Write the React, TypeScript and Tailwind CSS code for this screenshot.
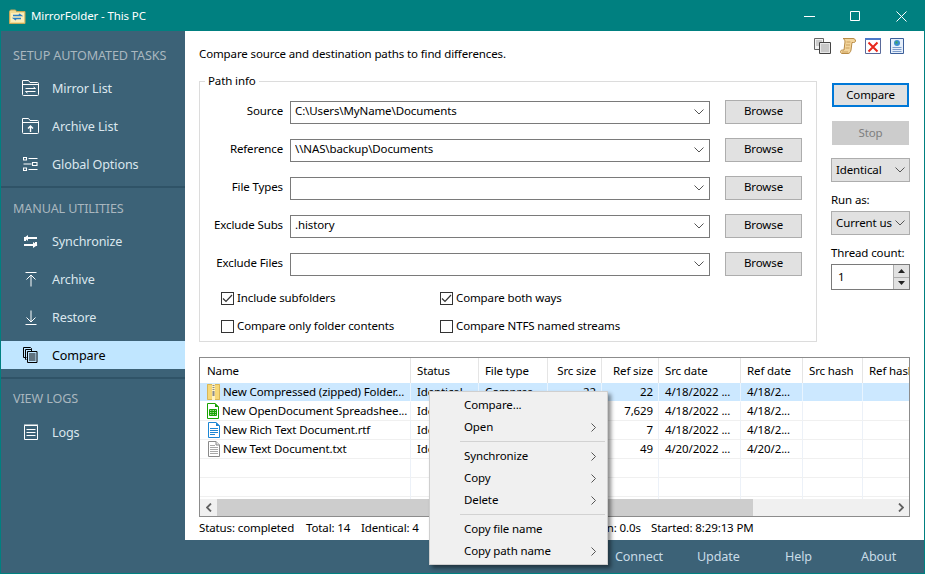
import type { ReactNode } from "react";

const FONT = "font-['Noto_Sans',sans-serif]";

function ChevronDown() {
  return (
    <svg width="10" height="6" viewBox="0 0 10 6" fill="none" stroke="#555" strokeWidth="1" className="shrink-0">
      <path d="M0.5 0.5 5 5l4.5-4.5" />
    </svg>
  );
}

function ChevronRight() {
  return (
    <svg width="5" height="9" viewBox="0 0 5 9" fill="none" stroke="#555" strokeWidth="1">
      <path d="M0.5 0.5 4.5 4.5 0.5 8.5" />
    </svg>
  );
}

/* sidebar icons */
function FolderBase({ children }: { children: ReactNode }) {
  return (
    <svg width="17" height="16" viewBox="0 0 17 16" fill="none" stroke="#fff" strokeWidth="1">
      <path d="M1.500 15.500a1 1 0 0 1-1-1v-14h6l1.500 2h7.500a1 1 0 0 1 1 1v11a1 1 0 0 1-1 1z" />
      <path d="M0.500 4.500h16" />
      {children}
    </svg>
  );
}

const MirrorIcon = () => (
  <FolderBase>
    <path d="M3.500 8.500h10l-2-1.500M13.500 11.500h-10l2 1.500" />
  </FolderBase>
);

const ArchiveListIcon = () => (
  <FolderBase>
    <path d="M8.500 14V8M6 10.500 8.500 8l2.500 2.500" strokeWidth="1.400" />
  </FolderBase>
);

const OptionsIcon = () => (
  <svg width="15" height="14" viewBox="0 0 15 14" fill="none" stroke="#fff">
    <path d="M0.500 0.500h3v2.500h-3zM5.500 1.500h9M0.500 7h8M9.500 5.500h4.500v3H9.500zM0.500 11h3v2.500h-3zM5.500 12.500h9" strokeWidth="1.100" />
  </svg>
);

const SyncIcon = () => (
  <svg width="15" height="13" viewBox="0 0 15 13" fill="none" stroke="#fff" strokeWidth="2">
    <path d="M14 3H2v3" />
    <path d="M1 10h12V7" />
    <path d="M5 0 1 3l4 3z" fill="#fff" strokeWidth="0" />
    <path d="M10 7l4.500 3L10 13z" fill="#fff" strokeWidth="0" />
  </svg>
);

const ArchiveIcon = () => (
  <svg width="12" height="15" viewBox="0 0 12 15" fill="none" stroke="#fff">
    <path d="M0.500 0.500h11M6 3V14.500M1.500 7.500 6 3l4.500 4.500" />
  </svg>
);

const RestoreIcon = () => (
  <svg width="12" height="15" viewBox="0 0 12 15" fill="none" stroke="#fff">
    <path d="M0.500 14.500h11M6 0.500V12M1.500 7.500 6 12l4.500-4.500" />
  </svg>
);

const CompareIcon = () => (
  <svg width="15" height="16" viewBox="0 0 15 16" fill="none" stroke="#000">
    <path d="M0.500 0.500h7l1 1v2M0.500 0.500v10h3" />
    <path d="M2.500 2.500h6v2M2.500 2.500v10h1" />
    <path d="M4.500 4.500h9.500v11H4.500z" fill="#c0e6ff" />
    <path d="M6 7h6.500M6 9h6.500M6 11h6.500M6 13h6.500" />
  </svg>
);

const LogsIcon = () => (
  <svg width="14" height="16" viewBox="0 0 14 16" fill="none" stroke="#fff">
    <path d="M0.500 1.500h13v14h-13z" />
    <path d="M1 0v2M3 0v2M5 0v2M7 0v2M9 0v2M11 0v2M13 0v2" />
    <path d="M2.500 5.500h9M2.500 8.500h9M2.500 11.500h9" />
  </svg>
);

function AppIcon() {
  return (
    <svg width="17" height="15" viewBox="0 0 17 15">
      <path d="M0.500 2.500 1.500 1h5l1 1.500H16v12H0.500z" fill="#f3dc92" stroke="#c9a95a" />
      <path d="M2 4h13v9H2z" fill="#fbeebc" />
      <path d="M4 6.500h8l-2-1.500M12 9.500H5l2 1.500" fill="none" stroke="#2b7fc4" strokeWidth="1.500" />
    </svg>
  );
}

/* toolbar icons */
const CopyTool = () => (
  <svg width="17" height="16" viewBox="0 0 17 16">
    <path d="M0.500 0.500h9v11h-9z" fill="#f2f2f2" stroke="#666" />
    <path d="M5.500 4.500h11v11h-11z" fill="#e8e8e8" stroke="#444" />
    <path d="M2 3h6M2 5h3M2 7h3M7 7h8M7 9h8M7 11h8M7 13h8" stroke="#a8a8a8" />
  </svg>
);

const ScrollTool = () => (
  <svg width="16" height="16" viewBox="0 0 16 16">
    <path d="M3 0.500h10c1.500 0 2.500 1 2.500 2.500 0 1-1 1.500-2 1.500H12L11 12c-.3 2-1.500 3.500-3 3.500H2C1 15.500 0.500 14.500 0.500 13.500S1.500 12 2.500 12H4l1-8c.2-1.500-1-3.500-2-3.500z" fill="#f3d59c" stroke="#b88b45" />
    <path d="M6.500 4h4M6 7h4M5.500 10h4M2 14h6" stroke="#c99f5f" />
  </svg>
);

const CloseTool = () => (
  <svg width="16" height="16" viewBox="0 0 16 16">
    <path d="M0.500 0.500h15v15h-15z" fill="#fff" stroke="#5a6a9a" />
    <path d="M0 0h16v2H0z" fill="#4d78c8" />
    <path d="M3.500 4.500 12.500 13.500M12.500 4.500 3.500 13.500" stroke="#e8281c" strokeWidth="2" />
  </svg>
);

const WebTool = () => (
  <svg width="14" height="16" viewBox="0 0 14 16">
    <path d="M0.500 0.500h13v15h-13z" fill="#e6effa" stroke="#3c5f9a" />
    <circle cx="7" cy="5" r="3" fill="#3a8fd0" />
    <path d="M5.500 3.500h2v2h-2z" fill="#3faa4a" />
    <path d="M2.500 9.500h9M2.500 11.500h9M2.500 13.500h9" stroke="#7d9ccb" />
  </svg>
);

/* file icons */
const ZipIcon = () => (
  <svg width="13" height="16" viewBox="0 0 13 16">
    <path d="M0 0h13v16H0z" fill="#f6d878" />
    <path d="M0.500 0.500h12v15H0.500z" fill="none" stroke="#d9b658" />
    <path d="M5 0h3v16H5z" fill="#fff3c4" />
    <path d="M5.500 1h2v1h-2zM5.500 3h2v1h-2zM5.500 5h2v1h-2zM5.500 7h2v5h-2z" fill="#8a8a8a" />
  </svg>
);

const SheetIcon = () => (
  <svg width="12" height="16" viewBox="0 0 12 16">
    <path d="M0.500 0.500H8L11.500 4v11.500H0.500z" fill="#fff" stroke="#18a303" />
    <path d="M8 0l4 4H8z" fill="#18a303" />
    <path d="M2.500 6.500h7v6h-7z" fill="#9fdb93" stroke="#18a303" />
    <path d="M2.500 8.500h7M2.500 10.500h7M5 6.500v6M7.500 6.500v6" stroke="#18a303" />
  </svg>
);

const RtfIcon = () => (
  <svg width="12" height="16" viewBox="0 0 12 16">
    <path d="M0.500 0.500H8L11.500 4v11.500H0.500z" fill="#fff" stroke="#1c86d4" />
    <path d="M8 0l4 4H8z" fill="#1c86d4" />
    <path d="M2 6.500h8M2 8.500h8M2 10.500h8M2 12.500h5" stroke="#1c86d4" />
  </svg>
);

const TxtIcon = () => (
  <svg width="12" height="16" viewBox="0 0 12 16">
    <path d="M0.500 0.500H8L11.500 4v11.500H0.500z" fill="#fff" stroke="#8a8a8a" />
    <path d="M8 0.500V4h3.500" fill="#e4e4e4" stroke="#8a8a8a" />
    <path d="M2 4.500h5M2 6.500h8M2 8.500h8M2 10.500h8M2 12.500h8" stroke="#a8a8a8" />
  </svg>
);

function NavItem({ icon, label, active }: { icon: ReactNode; label: string; active?: boolean }) {
  return (
    <div className={`mt-[10px] flex h-[28px] items-center ${active ? "bg-[#c0e6ff] text-black" : "text-[#dbe7ee]"}`}>
      <div className="flex w-[51px] justify-center pl-[8px]">{icon}</div>
      <span className="pt-[2px] text-[12.6px]">{label}</span>
    </div>
  );
}

function Heading({ children }: { children: string }) {
  return <div className="flex h-[20px] items-center pl-[12px] pt-[2px] text-[12.6px] text-[#a9b7bf]">{children}</div>;
}

function Sidebar() {
  return (
    <aside className="flex w-[184px] shrink-0 flex-col bg-[#3c6277]">
      <section className="border-b-2 border-[#2f5367] pt-[14px] pb-[8px]">
        <Heading>SETUP AUTOMATED TASKS</Heading>
        <div className="-mt-px">
          <NavItem icon={<MirrorIcon />} label="Mirror List" />
          <NavItem icon={<ArchiveListIcon />} label="Archive List" />
          <NavItem icon={<OptionsIcon />} label="Global Options" />
        </div>
      </section>
      <section className="border-b-2 border-[#2f5367] pt-[10px] pb-[8px]">
        <Heading>MANUAL UTILITIES</Heading>
        <div className="-mt-px">
          <NavItem icon={<SyncIcon />} label="Synchronize" />
          <NavItem icon={<ArchiveIcon />} label="Archive" />
          <NavItem icon={<RestoreIcon />} label="Restore" />
          <NavItem icon={<CompareIcon />} label="Compare" active />
        </div>
      </section>
      <section className="pt-[9px]">
        <Heading>VIEW LOGS</Heading>
        <NavItem icon={<LogsIcon />} label="Logs" />
      </section>
    </aside>
  );
}

function PathRow({ label, value }: { label: string; value: string }) {
  return (
    <div className="flex h-[24px] items-center">
      <label className="w-[84px] pb-[2px] pr-px text-right">{label}</label>
      <div className="ml-[6px] flex h-[23px] w-[420px] items-center border border-[#7a7a7a] bg-white pl-[4px] pr-[5px]">
        <input readOnly value={value} className="min-w-0 flex-1 bg-transparent pb-[2px] outline-none" />
        <ChevronDown />
      </div>
      <button className="ml-[15px] h-[24px] w-[77px] border border-[#adadad] bg-[#e1e1e1] pb-[2px]">Browse</button>
    </div>
  );
}

function Check({ label, checked }: { label: string; checked?: boolean }) {
  return (
    <div className="flex items-center gap-[3px]">
      <div className="flex h-[13px] w-[13px] items-center justify-center border border-[#333] bg-white">
        {checked && (
          <svg width="11" height="9" viewBox="0 0 11 9" fill="none" stroke="#333" strokeWidth="1.200">
            <path d="M1 4.500 4 7.500 10 1" />
          </svg>
        )}
      </div>
      <span>{label}</span>
    </div>
  );
}

function PathInfo() {
  return (
    <fieldset className="h-[269px] w-[618px] border border-[#dcdcdc]">
      <legend className="ml-[5px] px-[3px] leading-[16px]">Path info</legend>
      <div className="flex flex-col gap-[14px] pt-[11px]">
        <PathRow label="Source" value="C:\Users\MyName\Documents" />
        <PathRow label="Reference" value="\\NAS\backup\Documents" />
        <PathRow label="File Types" value="" />
        <PathRow label="Exclude Subs" value=".history" />
        <PathRow label="Exclude Files" value="" />
      </div>
      <div className="mt-[14px] grid grid-cols-[219px_1fr] gap-y-[12px] pl-[21px] leading-[16px]">
        <Check label="Include subfolders" checked />
        <Check label="Compare both ways" checked />
        <Check label="Compare only folder contents" />
        <Check label="Compare NTFS named streams" />
      </div>
    </fieldset>
  );
}

function SideSelect({ value }: { value: string }) {
  return (
    <div className="flex h-[24px] w-[79px] items-center justify-between overflow-hidden border border-[#adadad] bg-[#e1e1e1] pl-[4px] pr-[4px]">
      <span className="whitespace-nowrap pb-px">{value}</span>
      <ChevronDown />
    </div>
  );
}

function RightColumn() {
  return (
    <div className="ml-[14px] flex w-[79px] flex-col pt-[10px]">
      <button className="ml-px h-[24px] w-[77px] border-2 border-[#0078d7] bg-[#e1e1e1]">Compare</button>
      <button className="ml-px mt-[14px] h-[24px] w-[77px] border border-[#cccccc] bg-[#cccccc] text-[#7e7e7e]">Stop</button>
      <div className="mt-[13px]">
        <SideSelect value="Identical" />
      </div>
      <div className="mt-[8px] leading-[20px]">Run as:</div>
      <div className="mt-px">
        <SideSelect value="Current us" />
      </div>
      <div className="mt-[8px] whitespace-nowrap leading-[20px]">Thread count:</div>
      <div className="mt-px flex h-[26px] w-[79px] border border-[#7a7a7a]">
        <div className="flex-1 pl-[6px] leading-[24px]">1</div>
        <div className="flex w-[16px] flex-col border-l border-[#adadad]">
          <div className="flex flex-1 items-center justify-center border-b border-[#adadad] bg-[#e1e1e1]">
            <svg width="7" height="4" viewBox="0 0 7 4"><path d="M3.500 0 7 4H0z" fill="#222" /></svg>
          </div>
          <div className="flex flex-1 items-center justify-center bg-[#e1e1e1]">
            <svg width="7" height="4" viewBox="0 0 7 4"><path d="M3.500 4 7 0H0z" fill="#222" /></svg>
          </div>
        </div>
      </div>
    </div>
  );
}

const COLUMNS = "grid grid-cols-[211px_68px_69px_54px_57px_82px_62px_60px_60px]";

const HEADERS = ["Name", "Status", "File type", "Src size", "Ref size", "Src date", "Ref date", "Src hash", "Ref hash"];

const FILES = [
  { icon: <ZipIcon />, name: "New Compressed (zipped) Folder...", type: "Compres...", src: "22", ref: "22", srcDate: "4/18/2022 ...", refDate: "4/18/2..." },
  { icon: <SheetIcon />, name: "New OpenDocument Spreadshee...", type: "ods", src: "7,629", ref: "7,629", srcDate: "4/18/2022 ...", refDate: "4/18/2..." },
  { icon: <RtfIcon />, name: "New Rich Text Document.rtf", type: "rtf", src: "7", ref: "7", srcDate: "4/18/2022 ...", refDate: "4/18/2..." },
  { icon: <TxtIcon />, name: "New Text Document.txt", type: "txt", src: "49", ref: "49", srcDate: "4/20/2022 ...", refDate: "4/20/2..." },
];

function Cell({ children, right, selected }: { children?: ReactNode; right?: boolean; selected?: boolean }) {
  return (
    <div className={`flex h-[19px] items-center overflow-hidden whitespace-nowrap border-b border-r pl-[6px] pr-[5px] ${right ? "justify-end" : ""} ${selected ? "border-b-white border-r-[#e8f4ff] bg-[#cce8ff]" : "border-b-[#f0f0f0] border-r-[#ecf1f8]"}`}>
      {children}
    </div>
  );
}

function FileTable() {
  return (
    <div className="ml-[14px] mt-[15px] flex h-[160px] w-[711px] flex-col overflow-hidden border border-[#8c8c8c] bg-white">
      <div className={`${COLUMNS} h-[25px] shrink-0`}>
        {HEADERS.map((h, i) => (
          <div key={h} className={`flex items-center overflow-hidden whitespace-nowrap border-r border-[#e5e5e5] ${i === 0 ? "pl-[7px]" : "pl-[6px]"} ${i === 3 || i === 4 ? "justify-end pr-[5px]" : ""}`}>
            {h}
          </div>
        ))}
      </div>
      <div className="h-[116px] shrink-0 overflow-hidden">
        {FILES.map((f, i) => (
          <div key={f.name} className={COLUMNS}>
            <Cell selected={i === 0}>
              <span className="ml-px mr-[3px] flex w-[13px] justify-center">{f.icon}</span>
              {f.name}
            </Cell>
            <Cell selected={i === 0}>Identical</Cell>
            <Cell selected={i === 0}>{f.type}</Cell>
            <Cell right selected={i === 0}>{f.src}</Cell>
            <Cell right selected={i === 0}>{f.ref}</Cell>
            <Cell selected={i === 0}>{f.srcDate}</Cell>
            <Cell selected={i === 0}>{f.refDate}</Cell>
            <Cell selected={i === 0} />
            <Cell selected={i === 0} />
          </div>
        ))}
        {[0, 1, 2].map((r) => (
          <div key={r} className={COLUMNS}>
            {HEADERS.map((h) => (
              <Cell key={h} />
            ))}
          </div>
        ))}
      </div>
      <div className="flex h-[17px] shrink-0 bg-[#f0f0f0]">
        <div className="flex w-[17px] items-center justify-center">
          <svg width="6" height="9" viewBox="0 0 6 9" fill="none" stroke="#606060" strokeWidth="1.800"><path d="M5 0.500 1 4.500l4 4" /></svg>
        </div>
        <div className="w-[536px] bg-[#cdcdcd]" />
        <div className="flex-1" />
        <div className="flex w-[17px] items-center justify-center">
          <svg width="6" height="9" viewBox="0 0 6 9" fill="none" stroke="#606060" strokeWidth="1.800"><path d="M1 0.500 5 4.500l-4 4" /></svg>
        </div>
      </div>
    </div>
  );
}

function StatusBar() {
  return (
    <div className="ml-[14px] flex h-[21px] items-center whitespace-nowrap">
      <span className="w-[107px]">Status: completed</span>
      <span className="w-[55px]">Total: 14</span>
      <span className="w-[206px]">Identical: 4</span>
      <span className="w-[84px]">Duration: 0.0s</span>
      <span>Started: 8:29:13 PM</span>
    </div>
  );
}

function Footer() {
  return (
    <footer className="mt-auto flex h-[33px] shrink-0 items-center bg-[#3c6277] pt-[2px] text-[12.6px] text-[#c9dce7]">
      <div className="ml-[430px] w-[82px]">Connect</div>
      <div className="w-[88px]">Update</div>
      <div className="w-[76px]">Help</div>
      <div>About</div>
    </footer>
  );
}

function MenuItem({ label, arrow }: { label: string; arrow?: boolean }) {
  return (
    <div className="flex h-[22px] items-center justify-between pl-[34px] pr-[11px]">
      <span>{label}</span>
      {arrow && <ChevronRight />}
    </div>
  );
}

function ContextMenu() {
  return (
    <div className="absolute left-[428px] top-[390px] h-[174px] w-[179px] border border-[#cfcfcf] bg-[#f0f0f0] pt-[2px] shadow-[3px_3px_4px_rgba(0,0,0,0.45)]">
      <MenuItem label="Compare..." />
      <MenuItem label="Open" arrow />
      <div className="my-[3px] ml-[30px] mr-[2px] h-px bg-[#d2d2d2]" />
      <MenuItem label="Synchronize" arrow />
      <MenuItem label="Copy" arrow />
      <MenuItem label="Delete" arrow />
      <div className="my-[3px] ml-[30px] mr-[2px] h-px bg-[#d2d2d2]" />
      <MenuItem label="Copy file name" />
      <MenuItem label="Copy path name" arrow />
    </div>
  );
}

function TitleBar() {
  return (
    <header className="flex h-[30px] shrink-0 items-center bg-[#008080] text-white">
      <div className="ml-[8px] mr-[5px]">
        <AppIcon />
      </div>
      <span>MirrorFolder - This PC</span>
      <div className="ml-auto flex h-full items-center">
        <div className="flex w-[46px] justify-center">
          <svg width="11" height="1" viewBox="0 0 11 1"><path d="M0 0.500h11" stroke="#fff" /></svg>
        </div>
        <div className="flex w-[46px] justify-center">
          <svg width="10" height="10" viewBox="0 0 10 10" fill="none"><path d="M0.500 0.500h9v9h-9z" stroke="#fff" /></svg>
        </div>
        <div className="flex w-[46px] justify-center">
          <svg width="11" height="11" viewBox="0 0 11 11" fill="none"><path d="M0.500 0.500l10 10M10.500 0.500l-10 10" stroke="#fff" /></svg>
        </div>
      </div>
    </header>
  );
}

export default function App() {
  return (
    <div className={`${FONT} relative flex h-[574px] w-[925px] flex-col overflow-hidden border border-[#008080] text-[11.5px] tracking-[-0.12px] text-black`}>
      <TitleBar />
      <div className="flex min-h-0 flex-1">
        <Sidebar />
        <main className="flex min-w-0 flex-1 flex-col bg-white">
          <div className="flex items-start justify-between pl-[14px] pr-[20px] pt-[7px]">
            <span className="mt-[8px] leading-[16px]">Compare source and destination paths to find differences.</span>
            <div className="flex items-center gap-[9px]">
              <CopyTool />
              <ScrollTool />
              <CloseTool />
              <WebTool />
            </div>
          </div>
          <div className="mt-[11px] flex pl-[14px]">
            <PathInfo />
            <RightColumn />
          </div>
          <FileTable />
          <StatusBar />
          <Footer />
        </main>
      </div>
      <ContextMenu />
    </div>
  );
}
